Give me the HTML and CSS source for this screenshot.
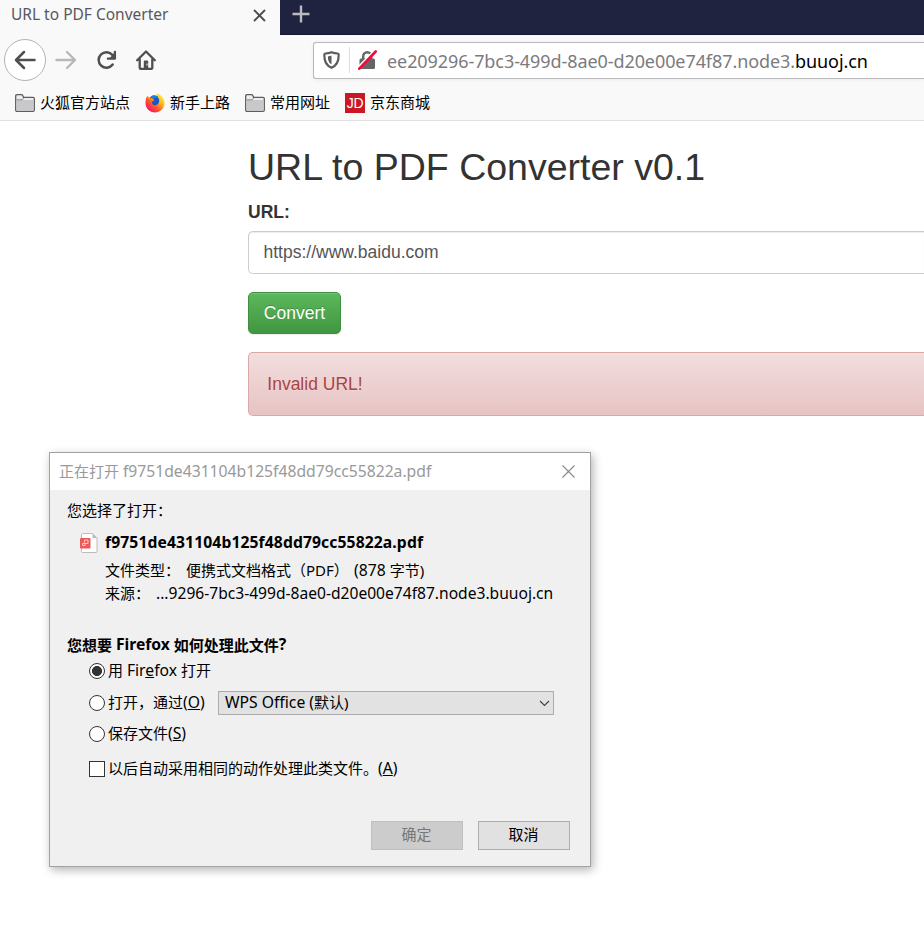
FILE: index.html
```html
<!DOCTYPE html>
<html lang="zh-CN">
<head>
<meta charset="utf-8">
<title>URL to PDF Converter</title>
<link rel="stylesheet" href="styles.css">
</head>
<body>
<header class="tabs">
  <div class="tab">
    <span class="tab-title">URL to PDF Converter</span>
    <svg class="tab-close" width="13" height="13" viewBox="0 0 13 13"><path d="M1 1l11 11M12 1L1 12" stroke="#4a4a4f" stroke-width="1.8" fill="none"/></svg>
  </div>
  <svg class="new-tab" width="18" height="18" viewBox="0 0 18 18"><path d="M9 .5v17M.5 9h17" stroke="#b9bac2" stroke-width="2.4" fill="none"/></svg>
</header>
<nav class="toolbar">
  <div class="back"><svg width="22" height="20" viewBox="0 0 22 20"><path d="M20.500 10H2.500M10 2L2 10l8 8" stroke="#4f4f52" stroke-width="2.5" fill="none" stroke-linecap="round" stroke-linejoin="round"/></svg></div>
  <svg class="forward" width="22" height="20" viewBox="0 0 22 20"><path d="M1.500 10h18M12 2l8 8-8 8" stroke="#b8b8ba" stroke-width="2.4" fill="none" stroke-linecap="round" stroke-linejoin="round"/></svg>
  <svg class="reload" width="20" height="20" viewBox="0 0 20 20"><path d="M15.700 14.600A7.800 7.800 0 1 1 15.500 5" stroke="#4f4f52" stroke-width="2.5" fill="none" stroke-linecap="round"/><path d="M17.900 2v6.700h-7" stroke="#4f4f52" stroke-width="2.3" fill="none" stroke-linejoin="round" stroke-linecap="round"/><path d="M18 2v7h-6z" fill="#4f4f52"/></svg>
  <svg class="home" width="20" height="20" viewBox="0 0 20 20"><path d="M1.200 10.200L10 1.500l8.800 8.700M3.700 9v8.700q0 1.200 1.200 1.200h10.200q1.200 0 1.200-1.200V9" stroke="#4f4f52" stroke-width="2.3" fill="none" stroke-linecap="round" stroke-linejoin="round"/><path d="M7.800 18.500v-7q0-1 1-1h2.400q1 0 1 1v7z" fill="#4f4f52"/><path d="M10.500 13.500h1v2h-1z" fill="#f9f9fa"/></svg>
  <div class="urlbar">
    <svg class="shield" width="17" height="18" viewBox="0 0 17 18"><path d="M8.500 1.200C6.500 2 4 2.400 2.300 2.500q-1 .1-1 1.100C1.200 10 2.500 14.500 8.500 16.800 14.500 14.500 15.800 10 15.700 3.600q0-1-1-1.100C13 2.400 10.500 2 8.500 1.200z" stroke="#5c5c5e" stroke-width="2.2" fill="none"/><path d="M8.500 4.600v8.700C6 12 5 10 4.900 5.500 6.200 5.400 7.400 5 8.500 4.600z" fill="#5c5c5e"/></svg>
    <span class="sep"></span>
    <svg class="lock" width="19" height="20" viewBox="0 0 19 20"><path d="M5.200 10V6.200a4 4 0 0 1 8 0V10" stroke="#666668" stroke-width="2.400" fill="none"/><rect x="1.500" y="8.500" width="15.500" height="10.500" rx="1.500" fill="#666668"/><path d="M0 17.500L16.500 .5" stroke="#fff" stroke-width="2"/><path d="M1.300 18.700L17.700 1.500" stroke="#f5093f" stroke-width="2.600" stroke-linecap="round"/></svg>
    <span class="address">ee209296-7bc3-499d-8ae0-d20e00e74f87.node3.<b>buuoj.cn</b></span>
  </div>
</nav>
<div class="bookmarks">
  <svg class="folder" width="20" height="18" viewBox="0 0 20 18"><path d="M.7 16V2q0-1.300 1.300-1.300h4.500q1 0 1.300.8l.8 1.800h9.400q1.300 0 1.300 1.300V16q0 1.300-1.300 1.300H2Q.7 17.300.7 16z" fill="#eee" stroke="#5d5d5f" stroke-width="1.300"/><path d="M1.500 6h17v10.500h-17z" fill="#c8c8ca"/><path d="M1.500 5.800h5.700l1.600-2" stroke="#88888a" fill="none"/></svg>
  <span class="bm bm1">火狐官方站点</span>
  <svg class="fox" width="20" height="20" viewBox="0 0 20 20"><defs><linearGradient id="fx" x1=".9" y1=".1" x2=".2" y2=".9"><stop offset="0" stop-color="#fff13c"/><stop offset=".35" stop-color="#ffb81c"/><stop offset=".65" stop-color="#ff5a26"/><stop offset="1" stop-color="#f5156c"/></linearGradient></defs><circle cx="9.800" cy="10" r="7.500" fill="#1458cc"/><path d="M1.200 4.500L3 2.800l.6 2L6.200 5 8 4 7.800 6l1.700 1.300-2.300 1.200c-1 2.500 1.500 4.500 4 3.500 2.300-.9 3.800-3.500 2.500-6.500L12 2.500 11.500.5c4 .8 7.300 4 8 8.500.6 5.600-4 10.400-9.500 10.400S.5 15 .5 10.200c0-2.200.2-4 .7-5.700z" fill="url(#fx)"/><path d="M6 3.500C8 1.500 12 2 13.300 5.500L10 4.800 8 6z" fill="#1b80dc"/></svg>
  <span class="bm bm2">新手上路</span>
  <svg class="folder" width="20" height="18" viewBox="0 0 20 18"><path d="M.7 16V2q0-1.300 1.300-1.300h4.500q1 0 1.300.8l.8 1.800h9.400q1.300 0 1.300 1.300V16q0 1.300-1.300 1.300H2Q.7 17.300.7 16z" fill="#eee" stroke="#5d5d5f" stroke-width="1.300"/><path d="M1.500 6h17v10.500h-17z" fill="#c8c8ca"/><path d="M1.500 5.800h5.700l1.600-2" stroke="#88888a" fill="none"/></svg>
  <span class="bm bm3">常用网址</span>
  <span class="jd">JD</span>
  <span class="bm bm4">京东商城</span>
</div>
<main class="page">
  <h2>URL to PDF Converter v0.1</h2>
  <label class="field-label">URL:</label>
  <div class="field">https://www.baidu.com</div>
  <button class="convert">Convert</button>
  <div class="alert">Invalid URL!</div>
</main>
<section class="dialog">
  <div class="titlebar">
    <span>正在打开 <i class="en title-name">f9751de431104b125f48dd79cc55822a.pdf</i></span>
    <svg width="13" height="13" viewBox="0 0 13 13"><path d="M.5 .5l12 12M12.500 .5l-12 12" stroke="#888" stroke-width="1.100" fill="none"/></svg>
  </div>
  <div class="content">
    <div class="line intro">您选择了打开：</div>
    <div class="line file">
      <svg width="18" height="20" viewBox="0 0 18 20"><path d="M1.500 1.500q0-1 1-1h10L17 5v13.500q0 1-1 1H2.500q-1 0-1-1z" fill="#fff" stroke="#bbb"/><path d="M12.500 .5V5H17z" fill="#bbb"/><rect y="5" width="10.500" height="10.500" rx="1" fill="#ee5857"/><path d="M4.500 9.500v-2.500h3.500v3.500H2.500v2h2.500v-3" stroke="#ffd0d0" stroke-width=".9" fill="none"/></svg>
      <b class="file-name">f9751de431104b125f48dd79cc55822a.pdf</b>
    </div>
    <div class="line type"><span class="key">文件类型：</span><span class="val">便携式文档格式（PDF）</span><span><i class="en">(878 </i>字节)</span></div>
    <div class="line source"><span class="key">来源：</span><span class="host">...9296-7bc3-499d-8ae0-d20e00e74f87.node3.buuoj.cn</span></div>
    <div class="line question">您想要 <i class="enb">Firefox</i> 如何处理此文件<i class="enb">?</i></div>
    <div class="line opt opt1"><span class="radio on"></span><span class="text">用 <i class="en">Fir<u>e</u>fox</i> 打开</span></div>
    <div class="line opt opt2"><span class="radio"></span><span class="text open-with">打开，通过<i class="en">(<u>O</u>)</i></span>
      <div class="select"><span class="text"><i class="en">WPS Office (</i>默认)</span><svg width="11" height="7" viewBox="0 0 11 7"><path d="M1 1l4.500 4.500L10 1" stroke="#444" stroke-width="1.200" fill="none"/></svg></div>
    </div>
    <div class="line opt opt3"><span class="radio"></span><span class="text">保存文件<i class="en">(<u>S</u>)</i></span></div>
    <div class="line opt opt4"><span class="check"></span><span class="text">以后自动采用相同的动作处理此类文件。<i class="en">(<u>A</u>)</i></span></div>
    <div class="actions"><button class="ok" disabled>确定</button><button>取消</button></div>
  </div>
</section>
</body>
</html>
```
FILE: styles.css
```css
* { box-sizing: border-box; }
body {
  margin: 0;
  width: 924px;
  height: 939px;
  overflow: hidden;
  position: relative;
  background: #fff;
  font: 15px/20px "Noto Sans", "Noto Sans CJK SC", sans-serif;
  color: #000;
}
svg { display: block; flex: none; }
span, b, i { white-space: pre; }
i { font-style: normal; }
.tabs { display: flex; height: 35px; background: #20233f; border-bottom: 1px solid #15172f; }
.tab { display: flex; justify-content: space-between; width: 280px; height: 35px; padding: 4px 14px 0 11px; background: #f9f9fa; }
.tab-title { font-size: 15.5px; color: #58585b; }
.tab-close { margin-top: 5px; }
.new-tab { margin: 5px 0 0 12px; }

.toolbar { display: flex; align-items: center; height: 50px; background: #f9f9fa; padding-left: 4px; }
.back { display: flex; align-items: center; justify-content: center; width: 42px; height: 42px; flex: none; border: 1px solid #b4b4b6; border-radius: 50%; background: #fff; }
.forward { margin-left: 9px; }
.reload { margin-left: 20px; }
.home { margin-left: 19px; }
.urlbar { display: flex; align-items: center; height: 37px; flex: 1; min-width: 0; margin-left: 157px; padding-left: 9px; border: 1px solid #b9b9bb; border-right: 0; border-radius: 3px 0 0 3px; background: #fff; box-shadow: 0 1px 4px rgba(0,0,0,.06); }
.sep { width: 1px; height: 26px; margin: 0 8px 0 9px; background: #ddd; }
.address { margin-left: 10px; padding-top: 1px; font-size: 18px; line-height: 24px; letter-spacing: -0.08px; color: #7b7b7d; }
.address b { font-weight: 400; color: #000; }

.bookmarks { display: flex; align-items: center; height: 36px; padding-left: 15px; background: #f9f9fa; border-bottom: 1px solid #e0e0e1; }
.bm { width: 91px; margin-left: 5px; padding-bottom: 2px; }
.bm1 { margin-right: 14px; }
.bm2, .bm3, .bm4 { width: 61px; }
.bm2 { margin-right: 14px; }
.bm3 { margin-right: 14px; }
.jd { width: 20px; height: 20px; background: #cb1724; color: #fff; font: 14px/21px "Liberation Sans", sans-serif; letter-spacing: -0.3px; text-align: center; }

.page { margin-left: 248px; font: 17.5px/25px "Liberation Sans", sans-serif; color: #333; }
h2 { margin: 26px 0 11px; font-size: 37.5px; line-height: 41px; font-weight: 500; }
.field-label { display: block; font-weight: 700; margin-bottom: 6px; line-height: 26px; }
.field { height: 43px; padding: 8px 14.5px; border: 1px solid #ccc; border-right: 0; border-radius: 5px 0 0 5px; color: #555; box-shadow: inset 0 1px 1px rgba(0,0,0,.075); }
.convert { display: block; width: 93px; height: 42px; margin: 18px 0; padding: 0; border: 1px solid #3e8f3e; border-radius: 5px; background: linear-gradient(#5cb85c, #419641); color: #fff; font: inherit; text-shadow: 0 -1px 0 rgba(0,0,0,.2); box-shadow: inset 0 1px 0 rgba(255,255,255,.15), 0 1px 1px rgba(0,0,0,.075); }
.alert { height: 64px; padding: 19px 18.3px; border: 1px solid #dca7a7; border-right: 0; border-radius: 5px 0 0 5px; background: linear-gradient(#f2dede, #e7c3c3); color: #a94442; text-shadow: 0 1px 0 rgba(255,255,255,.2); }

.dialog { position: absolute; left: 49px; top: 452px; width: 542px; height: 415px; border: 1px solid #a2a2a3; background: #f0f0f0; box-shadow: 2px 3px 9px rgba(0,0,0,.3); }
.titlebar { display: flex; justify-content: space-between; height: 37px; padding: 8px 15px 0 9px; background: #fff; color: #999; }
.titlebar svg { margin-top: 4px; }
.content { padding: 10px 20px 0 17px; }
.line { display: flex; align-items: center; height: 20px; white-space: pre; }
.en { font-size: 15.7px; line-height: 1; }
.enb { font-size: 15.7px; line-height: 1; }
.file { margin-top: 13px; padding-left: 13px; }
.file-name { margin-left: 7px; padding-bottom: 2px; font-size: 15.7px; letter-spacing: 0.1px; }
.type { margin-top: 7px; padding-left: 38px; }
.type .key { width: 81px; }
.type .val { width: 168px; }
.source { margin-top: 3px; padding-left: 38px; }
.source .key { width: 51px; }
.host { font-size: 15.6px; }
.question { margin-top: 32px; font-weight: 700; }
.opt { padding-left: 22px; gap: 3px; }
.opt1 { margin-top: 6px; }
.opt2 { margin-top: 12px; }
.opt3 { margin-top: 11px; }
.opt4 { margin-top: 15px; }
.text { padding-bottom: 2px; }
.radio, .check { flex: none; width: 16px; height: 16px; border: 1px solid #333; background: #fff; }
.radio { border-radius: 50%; }
.radio.on { background: radial-gradient(circle, #333 0 4.700px, #fff 5.300px); }
.open-with { width: 107px; }
.select { display: flex; align-items: center; justify-content: space-between; width: 336px; height: 24px; flex: none; padding: 0 3px 0 6px; border: 1px solid #acacac; background: #e2e2e2; }
.actions { display: flex; justify-content: flex-end; gap: 15px; margin-top: 42px; }
.actions button { width: 92px; height: 29px; padding: 0 1px 4px 0; border: 1px solid #acacac; border-radius: 0; background: #e1e1e1; font: inherit; color: #000; }
.actions .ok { background: #ccc; border-color: #bfbfbf; color: #777; }
```
